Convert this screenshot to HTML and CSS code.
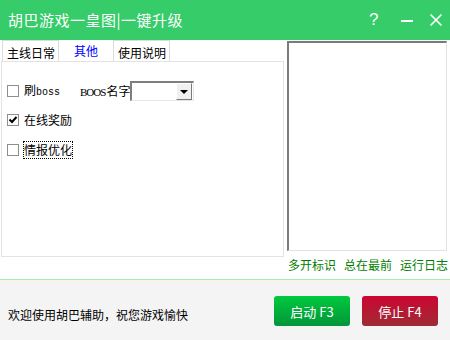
FILE: index.html
```html
<!DOCTYPE html>
<html lang="zh">
<head>
<meta charset="utf-8">
<title>胡巴游戏一皇图|一键升级</title>
<link rel="stylesheet" href="styles.css">
</head>
<body>
<div class="window">
  <header class="titlebar">
    <span class="title">胡巴游戏一皇图|一键升级</span>
    <div class="controls">
      <span class="help">?</span>
      <svg class="ctl" width="14" height="14" viewBox="0 0 14 14"><rect x="1" y="7" width="12" height="2" fill="#fff"/></svg>
      <svg class="ctl" width="14" height="14" viewBox="0 0 14 14"><path d="M1.5 1.5 L12.5 12.5 M12.5 1.5 L1.5 12.5" stroke="#fff" stroke-width="1.6" fill="none"/></svg>
    </div>
  </header>
  <main class="main">
    <section class="left">
      <div class="tabs">
        <span class="tab">主线日常</span>
        <span class="tab active">其他</span>
        <span class="tab">使用说明</span>
      </div>
      <div class="panel">
        <div class="row">
          <span class="box"></span>
          <span class="label">刷<span class="latin">boss</span></span>
          <span class="name"><span class="latin caps">BOOS</span>名字</span>
          <span class="select"><span class="drop"><span class="arrow"></span></span></span>
        </div>
        <div class="row">
          <span class="box checked"><svg width="10" height="10" viewBox="0 0 10 10"><path d="M1.5 4.5 L4 7 L8.5 2" stroke="#000" stroke-width="2" fill="none"/></svg></span>
          <span class="label">在线奖励</span>
        </div>
        <div class="row row3">
          <span class="box"></span>
          <span class="label focus">情报优化</span>
        </div>
      </div>
    </section>
    <aside class="right">
      <div class="log"></div>
      <div class="links">
        <span>多开标识</span>
        <span>总在最前</span>
        <span>运行日志</span>
      </div>
    </aside>
  </main>
  <footer class="footer">
    <span class="welcome">欢迎使用胡巴辅助，祝您游戏愉快</span>
    <div class="buttons">
      <button class="btn start">启动 F3</button>
      <button class="btn stop">停止 F4</button>
    </div>
  </footer>
</div>
</body>
</html>
```
FILE: styles.css
```css
* { box-sizing: border-box; }
html, body { margin: 0; padding: 0; }
body {
  font-family: "Noto Sans CJK SC", "DejaVu Sans", sans-serif;
  font-size: 12px;
  color: #000;
  background: #fff;
}
.window { width: 450px; height: 340px; display: flex; flex-direction: column; overflow: hidden; }

.titlebar {
  height: 40px;
  flex: none;
  background: #35cc69;
  display: flex;
  align-items: center;
  padding: 0 0 0 8px;
  color: #fff;
}
.title { font-size: 15px; line-height: 20px; letter-spacing: 0.5px; }
.controls { margin-left: auto; display: flex; align-items: center; height: 40px; }
.help {
  font-family: "Liberation Sans", sans-serif;
  font-size: 17px;
  line-height: 20px;
  width: 10px;
  margin-right: 21px;
}
.ctl { display: block; }
.ctl + .ctl { margin-left: 15px; margin-right: 7px; }

.main {
  height: 240px;
  flex: none;
  display: flex;
  background: #fff;
  border-bottom: 1px solid #a6f0a6;
}
.left { width: 286px; flex: none; }
.tabs { display: flex; height: 21px; padding-left: 2px; }
.tab {
  height: 21px;
  padding: 4px 3px 0 4px;
  line-height: 16px;
  border: 1px solid #dcdcdc;
  border-bottom: none;
}
.tab.active {
  border-color: #fff;
  color: #0000ff;
  width: 54px;
  text-align: center;
  padding: 2px 0 0 0;
}
.panel {
  margin-left: 1px;
  width: 283px;
  height: 196px;
  border: 1px solid #e3e3e3;
  padding: 19px 0 0 4px;
  display: flex;
  flex-direction: column;
  gap: 9px;
}
.row { display: flex; align-items: center; height: 20px; }
.row3 { margin-top: 1px; }
.box {
  width: 12px; height: 12px;
  border: 1px solid #8e8e8e;
  background: #fff;
  margin-left: 1px;
  margin-right: 5px;
  display: flex; align-items: center; justify-content: center;
}
.label { line-height: 16px; }
.latin { font-family: "Liberation Mono", monospace; font-size: 10px; }
.latin.caps { font-family: "Liberation Serif", serif; font-size: 11px; letter-spacing: -1px; margin-right: 1px; }
.focus { outline: 1px dotted #000; outline-offset: 0; }
.name { margin-left: 20px; line-height: 16px; }
.select {
  margin-left: 0;
  width: 64px; height: 20px;
  border-top: 2px solid #7e7e7e;
  border-left: 2px solid #7e7e7e;
  border-right: 1px solid #e6e6e6;
  border-bottom: 1px solid #e6e6e6;
  background: #fff;
  display: flex;
  justify-content: flex-end;
  padding-right: 1px;
}
.drop {
  width: 16px; height: 17px;
  background: #f0f0f0;
  border-top: 1px solid #fff;
  border-left: 1px solid #fff;
  border-right: 1px solid #7a7a7a;
  border-bottom: 1px solid #7a7a7a;
  display: flex; align-items: center; justify-content: center;
}
.arrow {
  width: 0; height: 0;
  border-left: 4px solid transparent;
  border-right: 4px solid transparent;
  border-top: 4px solid #000;
}

.right { flex: none; width: 162px; padding-left: 1px; padding-top: 1px; }
.log {
  width: 160px;
  height: 210px;
  border-top: 2px solid #7b7b7b;
  border-left: 2px solid #7b7b7b;
  border-right: 1px solid #e2e2e2;
  border-bottom: 1px solid #e2e2e2;
  background: #fff;
}
.links {
  margin-top: 6px;
  display: flex;
  gap: 8px;
  padding-left: 1px;
  color: #008000;
  line-height: 16px;
}

.footer {
  flex: 1;
  background: #f4f4f4;
  display: flex;
  align-items: flex-start;
  padding: 0 12px 0 8px;
}
.welcome { margin-top: 27px; line-height: 16px; }
.buttons { margin-left: auto; margin-top: 16px; display: flex; gap: 12px; }
.btn {
  width: 76px; height: 30px;
  border: none;
  border-radius: 3px;
  color: #fff;
  font-family: "Noto Sans CJK SC", "Liberation Sans", sans-serif;
  font-size: 13px;
  padding: 0;
}
.start { background: linear-gradient(#00c93c, #01963a); }
.stop { background: linear-gradient(#cb0631, #a02b35); }
```
